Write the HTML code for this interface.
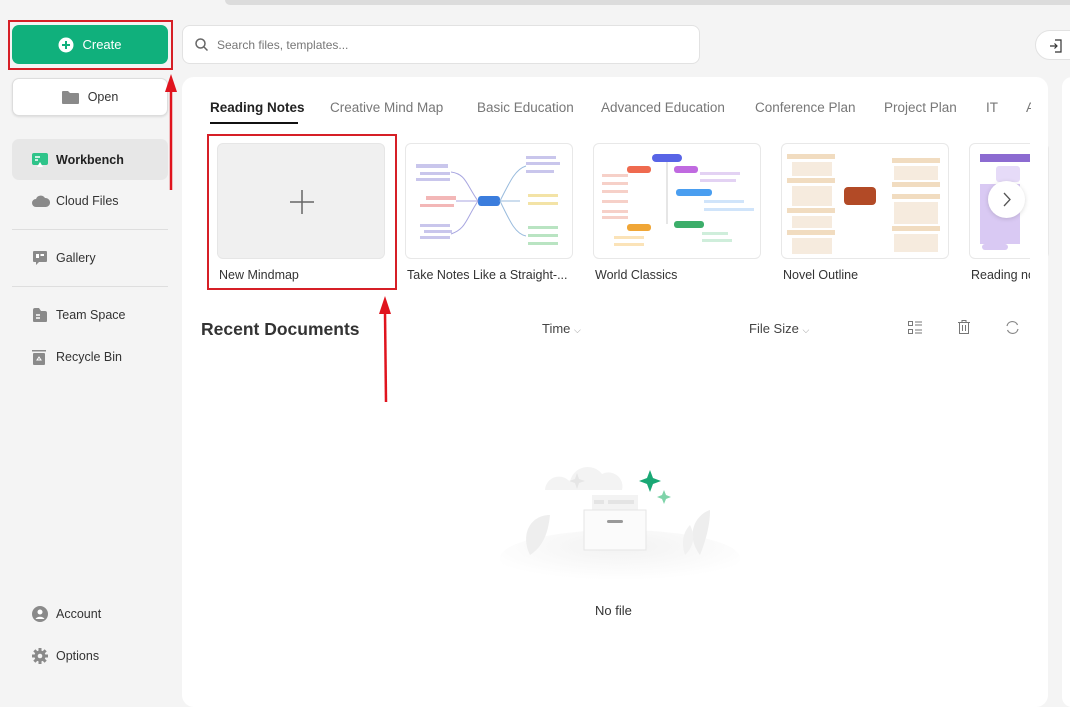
<!DOCTYPE html>
<html><head><meta charset="utf-8"><style>
*{box-sizing:border-box;margin:0;padding:0}
body{width:1070px;height:697px;overflow:hidden;background:#f4f4f4;font-family:"Liberation Sans",sans-serif;position:relative;color:#222}
.abs{position:absolute}
.nav{position:absolute;left:12px;width:156px;height:40px;display:flex;align-items:center;font-size:12.5px;color:#333}
.nav svg{position:absolute;left:20px}
.nav span{position:absolute;left:44px}
.div{position:absolute;left:12px;width:156px;height:1px;background:#dedede}
.tab{position:absolute;top:100px;font-size:13.5px;color:#777}
.card{position:absolute;top:143px;width:168px;height:116px;border:1px solid #e8e8e8;border-radius:6px;background:#fff;overflow:hidden}
.lbl{position:absolute;top:268px;font-size:12.5px;color:#333}
.red{position:absolute;border:2px solid #d61f26}
</style></head><body>
<div class="abs" style="left:225px;top:0;width:845px;height:5px;background:#dcdcdc;border-radius:0 0 0 6px"></div>

<div class="abs" style="left:12px;top:25px;width:156px;height:39px;background:#10b07c;border-radius:7px;color:#fff;font-size:13px;display:flex;align-items:center;justify-content:center">
<svg width="16" height="16" viewBox="0 0 16 16" style="margin-right:8px"><circle cx="8" cy="8" r="7.5" fill="#fff"/><path d="M8 4v8M4 8h8" stroke="#10b07c" stroke-width="2"/></svg>Create</div>
<div class="red" style="left:8px;top:20px;width:165px;height:50px"></div>

<div class="abs" style="left:12px;top:78px;width:156px;height:38px;background:#fff;border:1px solid #ddd;border-radius:7px;box-shadow:0 1px 2px rgba(0,0,0,.1);font-size:12.5px;display:flex;align-items:center;justify-content:center;color:#333">
<svg width="17" height="14" viewBox="0 0 17 14" style="margin-right:9px"><path d="M0 2a1 1 0 0 1 1-1h5l2 2h8a1 1 0 0 1 1 1v9a1 1 0 0 1-1 1H1a1 1 0 0 1-1-1z" fill="#8a8a8a"/></svg>Open</div>

<div class="nav" style="top:139px;height:41px;background:#e7e7e7;border-radius:7px;font-weight:bold;color:#222"><svg width="16" height="14" viewBox="0 0 16 14"><rect width="16" height="12" rx="2" fill="#2fc48a"/><path d="M3 4h5M3 7h3" stroke="#fff" stroke-width="1.5"/><path d="M5 14l3-5 3 5z" fill="#fff"/></svg><span>Workbench</span></div>
<div class="nav" style="top:181px"><svg width="18" height="12" viewBox="0 0 18 12"><path d="M4 12a4 4 0 0 1 0-8 5 5 0 0 1 9-1 4.5 4.5 0 0 1 1 9z" fill="#8a8a8a"/></svg><span>Cloud Files</span></div>
<div class="div" style="top:229px"></div>
<div class="nav" style="top:238px"><svg width="16" height="16" viewBox="0 0 16 16"><path d="M2 1h12a1 1 0 0 1 1 1v9a1 1 0 0 1-1 1H7l-3 3v-3H2a1 1 0 0 1-1-1V2a1 1 0 0 1 1-1z" fill="#8a8a8a"/><rect x="4" y="4" width="3" height="4" fill="#fff"/><rect x="8.5" y="4" width="3.5" height="2" fill="#fff"/></svg><span>Gallery</span></div>
<div class="div" style="top:286px"></div>
<div class="nav" style="top:295px"><svg width="16" height="16" viewBox="0 0 16 16"><path d="M1 3a2 2 0 0 1 2-2h4l2 3h4a2 2 0 0 1 2 2v8a1 1 0 0 1-1 1H2a1 1 0 0 1-1-1z" fill="#8a8a8a"/><path d="M4 8h4M4 11h4" stroke="#fff" stroke-width="1.5"/></svg><span>Team Space</span></div>
<div class="nav" style="top:337px"><svg width="14" height="16" viewBox="0 0 14 16"><rect x="0" y="1" width="14" height="1.5" fill="#8a8a8a"/><rect x="1" y="4" width="12" height="12" rx="1" fill="#8a8a8a"/><path d="M7 8l2 3H5z" fill="none" stroke="#fff"/></svg><span>Recycle Bin</span></div>
<div class="nav" style="top:594px"><svg width="16" height="16" viewBox="0 0 16 16"><circle cx="8" cy="8" r="8" fill="#8a8a8a"/><circle cx="8" cy="6" r="2.5" fill="#fff"/><path d="M3.5 13a5 4 0 0 1 9 0z" fill="#fff"/></svg><span>Account</span></div>
<div class="nav" style="top:636px"><svg width="16" height="16" viewBox="0 0 16 16"><g fill="#8a8a8a"><circle cx="8" cy="8" r="5.5"/><rect x="6.5" y="0" width="3" height="16"/><rect x="0" y="6.5" width="16" height="3"/><rect x="6.5" y="0" width="3" height="16" transform="rotate(45 8 8)"/><rect x="6.5" y="0" width="3" height="16" transform="rotate(-45 8 8)"/></g><circle cx="8" cy="8" r="2.3" fill="#f4f4f4"/></svg><span>Options</span></div>

<div class="abs" style="left:182px;top:25px;width:518px;height:39px;background:#fff;border:1px solid #e2e2e2;border-radius:8px;font-size:12px;color:#777;display:flex;align-items:center;padding-left:12px">
<svg width="13" height="13" viewBox="0 0 13 13" style="margin-right:9px"><circle cx="5.5" cy="5.5" r="4.5" fill="none" stroke="#666" stroke-width="1.5"/><path d="M9 9l3.5 3.5" stroke="#666" stroke-width="1.5"/></svg>Search files, templates...</div>
<div class="abs" style="left:1035px;top:30px;width:60px;height:30px;background:#fff;border:1px solid #e2e2e2;border-radius:15px"><svg width="14" height="14" viewBox="0 0 14 14" style="position:absolute;left:13px;top:8px"><path d="M6 1h6v12H6M1 7h7M5.5 4.5L8 7l-2.5 2.5" fill="none" stroke="#333" stroke-width="1.2"/></svg></div>

<div class="abs" style="left:182px;top:77px;width:866px;height:630px;background:#fff;border-radius:12px"></div>
<div class="abs" style="left:1062px;top:77px;width:20px;height:630px;background:#fff;border-radius:12px"></div>

<div class="tab" style="left:210px;color:#222;font-weight:bold">Reading Notes</div>
<div class="abs" style="left:210px;top:122px;width:88px;height:2px;background:#111"></div>
<div class="tab" style="left:330px">Creative Mind Map</div>
<div class="tab" style="left:477px">Basic Education</div>
<div class="tab" style="left:601px">Advanced Education</div>
<div class="tab" style="left:755px">Conference Plan</div>
<div class="tab" style="left:884px">Project Plan</div>
<div class="tab" style="left:986px">IT</div>
<div class="tab" style="left:1026px">A</div>
<div class="abs" style="left:1031px;top:90px;width:17px;height:200px;background:#fff"></div>

<div class="card" style="left:217px;background:#f0f0f0;border-color:#e6e6e6"><svg width="168" height="116"><path d="M84 46v24M72 58h24" stroke="#666" stroke-width="1.5"/></svg></div>
<div class="lbl" style="left:219px">New Mindmap</div>
<div class="red" style="left:207px;top:134px;width:190px;height:156px"></div>

<div class="card" style="left:405px"><svg width="168" height="116"><rect x="72" y="52" width="22" height="10" rx="3" fill="#3b7ddd"/><g fill="none" stroke-width="1"><path d="M72 57C60 40 60 30 45 28M72 57H50M72 57C60 75 60 85 45 90" stroke="#a8a6e0"/><path d="M94 57C105 35 110 25 120 22M94 57h20M94 57C105 80 110 90 120 92" stroke="#9bd"/></g><g fill="#c9c6ec"><rect x="10" y="20" width="32" height="4"/><rect x="14" y="28" width="30" height="3"/><rect x="10" y="34" width="34" height="3"/><rect x="20" y="52" width="30" height="4" fill="#f3b7b7"/><rect x="14" y="60" width="34" height="3" fill="#f3b7b7"/><rect x="14" y="80" width="30" height="3"/><rect x="18" y="86" width="28" height="3"/><rect x="14" y="92" width="30" height="3"/><rect x="120" y="12" width="30" height="3"/><rect x="120" y="18" width="34" height="3"/><rect x="120" y="26" width="28" height="3"/><rect x="122" y="50" width="30" height="3" fill="#f3e3a6"/><rect x="122" y="58" width="30" height="3" fill="#f3e3a6"/><rect x="122" y="82" width="30" height="3" fill="#b9e4c2"/><rect x="122" y="90" width="30" height="3" fill="#b9e4c2"/><rect x="122" y="98" width="30" height="3" fill="#b9e4c2"/></g></svg></div>
<div class="lbl" style="left:407px">Take Notes Like a Straight-...</div>

<div class="card" style="left:593px"><svg width="168" height="116"><rect x="58" y="10" width="30" height="8" rx="4" fill="#5864e6"/><rect x="33" y="22" width="24" height="7" rx="3" fill="#ef6a4f"/><rect x="80" y="22" width="24" height="7" rx="3" fill="#c06ae0"/><rect x="82" y="45" width="36" height="7" rx="3" fill="#4a9ef0"/><rect x="80" y="77" width="30" height="7" rx="3" fill="#3cae6a"/><rect x="33" y="80" width="24" height="7" rx="3" fill="#f0a636"/><g fill="none"><path d="M73 18V80" stroke="#ccc"/></g><g fill="#f6d0c8"><rect x="8" y="30" width="26" height="3"/><rect x="8" y="38" width="26" height="3"/><rect x="8" y="46" width="26" height="3"/><rect x="8" y="56" width="26" height="3"/><rect x="8" y="66" width="26" height="3"/><rect x="8" y="72" width="26" height="3"/></g><g fill="#e3d2f3"><rect x="106" y="28" width="40" height="3"/><rect x="106" y="35" width="36" height="3"/></g><g fill="#d0e4fa"><rect x="110" y="56" width="40" height="3"/><rect x="110" y="64" width="50" height="3"/></g><g fill="#cfeedb"><rect x="108" y="88" width="26" height="3"/><rect x="108" y="95" width="30" height="3"/></g><g fill="#fbe3b8"><rect x="20" y="92" width="30" height="3"/><rect x="20" y="99" width="30" height="3"/></g></svg></div>
<div class="lbl" style="left:595px">World Classics</div>

<div class="card" style="left:781px"><svg width="168" height="116"><rect x="62" y="43" width="32" height="18" rx="4" fill="#b24a26"/><g fill="#f1dcc0"><rect x="5" y="10" width="48" height="5"/><rect x="5" y="34" width="48" height="5"/><rect x="5" y="64" width="48" height="5"/><rect x="5" y="86" width="48" height="5"/><rect x="110" y="14" width="48" height="5"/><rect x="110" y="38" width="48" height="5"/><rect x="110" y="50" width="48" height="5"/><rect x="110" y="82" width="48" height="5"/></g><g fill="#f6ebde"><rect x="10" y="18" width="40" height="14"/><rect x="10" y="42" width="40" height="20"/><rect x="10" y="72" width="40" height="12"/><rect x="10" y="94" width="40" height="16"/><rect x="112" y="22" width="44" height="14"/><rect x="112" y="58" width="44" height="22"/><rect x="112" y="90" width="44" height="18"/></g></svg></div>
<div class="lbl" style="left:783px">Novel Outline</div>

<div class="card" style="left:969px;width:80px"><svg width="80" height="116"><rect x="10" y="10" width="70" height="8" fill="#8c6bd1"/><rect x="10" y="40" width="40" height="60" fill="#d9c9f3"/><rect x="26" y="22" width="24" height="16" rx="3" fill="#e6dbf8"/><rect x="12" y="100" width="26" height="6" rx="3" fill="#d9c9f3"/></svg></div>
<div class="lbl" style="left:971px">Reading no</div>
<div class="abs" style="left:1030px;top:140px;width:18px;height:150px;background:#fff"></div>
<div class="abs" style="left:988px;top:181px;width:37px;height:37px;border-radius:50%;background:#fff;box-shadow:0 1px 5px rgba(0,0,0,.15)"><svg width="37" height="37"><path d="M16 12l6 6.5-6 6.5" fill="none" stroke="#555" stroke-width="1.3"/></svg></div>

<div class="abs" style="left:201px;top:319px;font-size:17.5px;font-weight:bold;color:#333">Recent Documents</div>
<div class="abs" style="left:542px;top:321px;font-size:13px;color:#444">Time <span style="font-size:9px;color:#999">⌵</span></div>
<div class="abs" style="left:749px;top:321px;font-size:13px;color:#444">File Size <span style="font-size:9px;color:#999">⌵</span></div>
<svg class="abs" style="left:907px;top:320px" width="16" height="16"><g fill="none" stroke="#777"><rect x="1.5" y="1.5" width="4" height="4"/><rect x="1.5" y="9.5" width="4" height="4"/><path d="M8 2h7M8 5h7M8 10h7M8 13h7"/></g></svg>
<svg class="abs" style="left:957px;top:319px" width="14" height="16"><g fill="none" stroke="#777"><path d="M1 3.5h12M5 3.5V1.5h4v2M2.5 3.5v11h9v-11M5.5 6v6M8.5 6v6"/></g></svg>
<svg class="abs" style="left:1005px;top:320px" width="15" height="15"><g fill="none" stroke="#888" stroke-width="1.2"><path d="M12.5 5A5.5 5.5 0 0 0 2 6"/><path d="M2.5 10A5.5 5.5 0 0 0 13 9"/></g></svg>

<svg class="abs" style="left:500px;top:440px" width="240" height="150">
<defs><radialGradient id="g" cx="50%" cy="30%" r="60%"><stop offset="0" stop-color="#f2f2f2"/><stop offset="1" stop-color="#fff"/></radialGradient></defs>
<ellipse cx="120" cy="118" rx="120" ry="28" fill="url(#g)"/>
<path d="M45 50a14 14 0 0 1 25-8a18 18 0 0 1 32-8a14 14 0 0 1 20 16z" fill="#f3f3f3"/>
<path d="M77 33l2 6 6 2-6 2-2 6-2-6-6-2 6-2z" fill="#e6e6e6"/>
<path d="M150 30l3 8 8 3-8 3-3 8-3-8-8-3 8-3z" fill="#1aa875"/>
<path d="M164 50l2 5 5 2-5 2-2 5-2-5-5-2 5-2z" fill="#7fd3a9"/>
<path d="M30 115c-10-20 0-40 20-40-2 20-8 32-20 40z" fill="#eeeeee"/>
<path d="M200 115c10-25 10-40 10-45-15 5-25 25-10 45z" fill="#eeeeee"/>
<path d="M185 115c-5-15 0-25 5-30 5 10 5 20-5 30z" fill="#f1f1f1"/>
<rect x="92" y="55" width="46" height="30" fill="#f3f3f3"/>
<rect x="84" y="70" width="62" height="40" fill="#fbfbfb" stroke="#e6e6e6"/>
<rect x="107" y="80" width="16" height="3" rx="1.5" fill="#999"/>
<rect x="94" y="60" width="10" height="4" fill="#e4e4e4"/><rect x="108" y="60" width="26" height="4" fill="#e4e4e4"/>
</svg>
<div class="abs" style="left:595px;top:603px;font-size:13px;color:#333">No file</div>

<svg class="abs" style="left:0;top:0" width="1070" height="697"><g fill="#e0141e" stroke="#e0141e" stroke-width="2.5"><path d="M171 190V90"/><path d="M165 92l6-18 6 18z" stroke="none"/><path d="M386 402L385 312"/><path d="M379 314l6-18 6 18z" stroke="none"/></g></svg>
</body></html>
